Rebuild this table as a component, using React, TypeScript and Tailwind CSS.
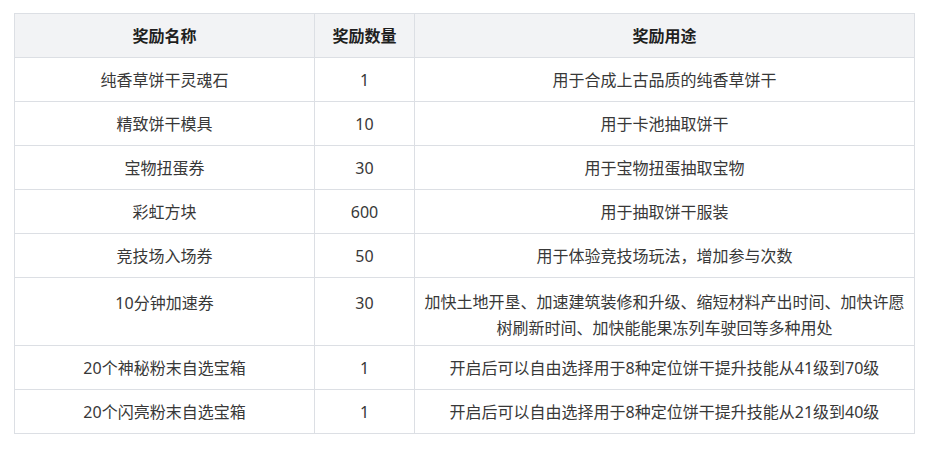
const rows: { name: string; count: string; use: string; tall?: boolean }[] = [
  { name: "纯香草饼干灵魂石", count: "1", use: "用于合成上古品质的纯香草饼干" },
  { name: "精致饼干模具", count: "10", use: "用于卡池抽取饼干" },
  { name: "宝物扭蛋券", count: "30", use: "用于宝物扭蛋抽取宝物" },
  { name: "彩虹方块", count: "600", use: "用于抽取饼干服装" },
  { name: "竞技场入场券", count: "50", use: "用于体验竞技场玩法，增加参与次数" },
  {
    name: "10分钟加速券",
    count: "30",
    use: "加快土地开垦、加速建筑装修和升级、缩短材料产出时间、加快许愿树刷新时间、加快能能果冻列车驶回等多种用处",
    tall: true,
  },
  { name: "20个神秘粉末自选宝箱", count: "1", use: "开启后可以自由选择用于8种定位饼干提升技能从41级到70级" },
  { name: "20个闪亮粉末自选宝箱", count: "1", use: "开启后可以自由选择用于8种定位饼干提升技能从21级到40级" },
];

export default function App() {
  return (
    <div className="h-[449px] w-[929px] bg-white pl-[14px] pt-[13px] font-['Noto_Sans','Noto_Sans_CJK_SC',sans-serif] text-[16px] leading-[26px] text-[#383838]">
      <div className="grid w-[901px] grid-cols-[300px_100px_500px] border-l border-t border-[#dcdfe4]">
        {/* Header */}
        {["奖励名称", "奖励数量", "奖励用途"].map((h) => (
          <div
            key={h}
            className="flex h-[44px] items-center justify-center border-b border-r border-[#dcdfe4] bg-[#f2f3f5] font-bold text-[#1f1f1f]"
          >
            {h}
          </div>
        ))}

        {/* Body */}
        {rows.map((r) => {
          const cell = r.tall
            ? "flex h-[68px] items-center justify-center border-b border-r border-[#dcdfe4] px-2 pt-[6px] text-center"
            : "flex h-[44px] items-center justify-center border-b border-r border-[#dcdfe4] px-2 text-center";
          const side = r.tall
            ? "flex h-[68px] items-start justify-center border-b border-r border-[#dcdfe4] px-2 pt-[12px] text-center"
            : cell;
          return (
            <div key={r.name} className="contents">
              <div className={side}>{r.name}</div>
              <div className={side}>{r.count}</div>
              <div className={cell}>{r.use}</div>
            </div>
          );
        })}
      </div>
    </div>
  );
}
